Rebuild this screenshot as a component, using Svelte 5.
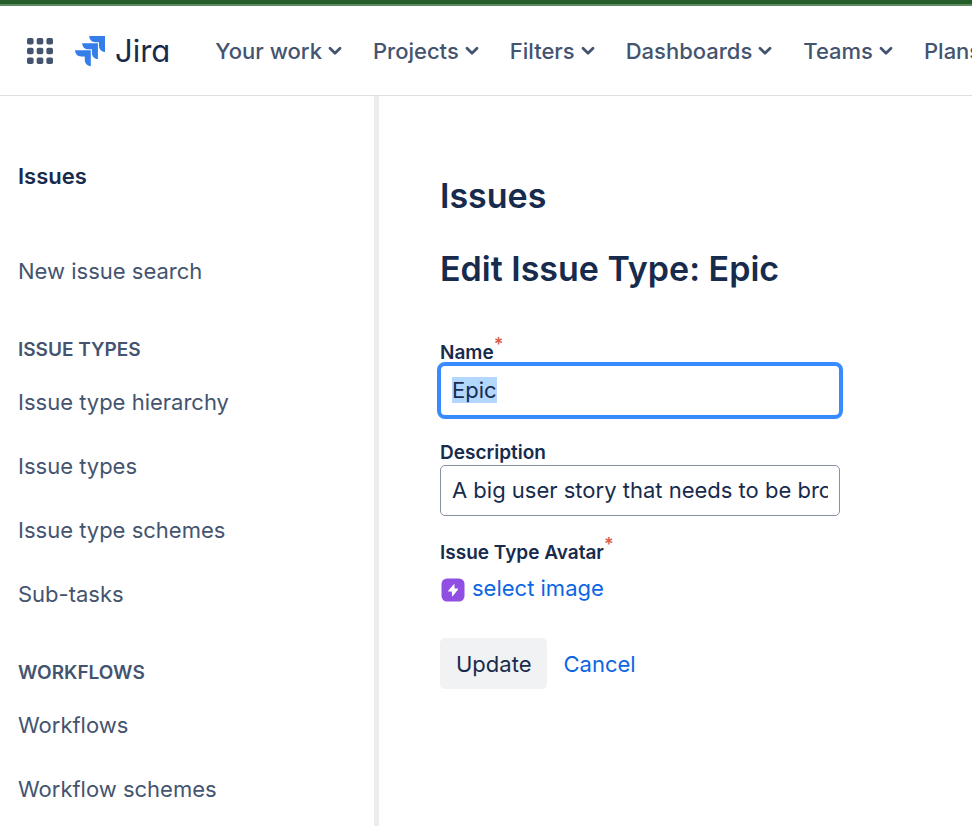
<script>
  import { onMount } from "svelte";

  const navItems = [
    "Your work",
    "Projects",
    "Filters",
    "Dashboards",
    "Teams",
    "Plans",
  ];

  const sections = [
    {
      title: "Issue types",
      links: [
        "Issue type hierarchy",
        "Issue types",
        "Issue type schemes",
        "Sub-tasks",
      ],
    },
    { title: "Workflows", links: ["Workflows", "Workflow schemes"] },
  ];

  let name = "Epic";
  let description =
    "A big user story that needs to be broken down. Created by Jira Software - do not edit or delete.";
  let nameRef = null;

  onMount(() => {
    nameRef.focus();
    nameRef.select();
  });
</script>

<div class="page">
  <header>
    <button class="switcher" aria-label="Switch to">
      <svg width="26" height="26" viewBox="0 0 26 26" fill="currentColor">
        {#each [0, 9.7, 19.4] as y}
          {#each [0, 9.7, 19.4] as x}
            <rect {x} {y} width="6.6" height="6.6" rx="1.8" />
          {/each}
        {/each}
      </svg>
    </button>
    <a class="logo" href="#home">
      <svg width="30" height="32" viewBox="0 -1 30 32" fill="#357de8">
        <path d="M14.2 0H30V16C26.4 15.8 24 13.2 24 9.8V6.2H20.4C16.8 6.2 14.3 3.6 14.2 0Z" />
        <path d="M7.2 7.2H22.9V23C19.3 22.8 16.9 20.3 16.9 16.9V13.3H13.3C9.7 13.3 7.3 10.8 7.2 7.2Z" />
        <path d="M0 14.3H15.8V30.3C12.2 30 9.8 27.5 9.8 24.1V20.5H6.2C2.6 20.5 0.2 17.9 0 14.3Z" />
      </svg>
      <span>Jira</span>
    </a>
    <nav>
      {#each navItems as item}
        <button>
          {item}
          <svg width="14" height="10" viewBox="0 0 14 10" fill="none">
            <path
              d="M2 2.3L7 7.2L12 2.3"
              stroke="currentColor"
              stroke-width="2.8"
              stroke-linecap="round"
              stroke-linejoin="round" />
          </svg>
        </button>
      {/each}
    </nav>
  </header>

  <div class="body">
    <aside>
      <h2>Issues</h2>
      <a href="#search">New issue search</a>
      {#each sections as section}
        <h3>{section.title}</h3>
        {#each section.links as link}
          <a href="#link">{link}</a>
        {/each}
      {/each}
    </aside>

    <main>
      <h1>Issues</h1>
      <h1>Edit Issue Type: Epic</h1>
      <form on:submit|preventDefault>
        <div class="field">
          <label for="name">Name<span class="required">*</span></label>
          <input id="name" bind:this={nameRef} bind:value={name} />
        </div>
        <div class="field">
          <label for="description">Description</label>
          <input id="description" bind:value={description} />
        </div>
        <div class="field">
          <div class="label">
            Issue Type Avatar<span class="required">*</span>
          </div>
          <a class="avatar" href="#avatar">
            <svg width="24" height="24" viewBox="0 0 24 24">
              <rect x="0.5" y="0.5" width="23" height="23" rx="5.5" fill="#904ee2" />
              <path
                d="M12.9 6.2L7.2 12.7Q6.9 13.5 7.6 13.6H10.9V17.6Q11.2 18.5 11.9 18L17 11.5Q17.4 10.7 16.6 10.6H13.5V6.6Q13.4 5.9 12.9 6.2Z"
                fill="#fff" />
            </svg>
            select image
          </a>
        </div>
        <div class="actions">
          <button type="submit">Update</button>
          <a href="#cancel">Cancel</a>
        </div>
      </form>
    </main>
  </div>
</div>

<style>
  :global(body) {
    background: #fff;
  }

  .page {
    min-height: 100vh;
    display: flex;
    flex-direction: column;
    overflow: hidden;
    box-sizing: border-box;
    border-top: 4px solid #265e2b;
    font-family: Inter, "Liberation Sans", sans-serif;
    font-size: 22px;
    line-height: 32px;
    color: #172b4d;
  }

  button {
    font: inherit;
    color: inherit;
    border: 0;
    padding: 0;
    background: transparent;
    cursor: pointer;
  }

  a {
    color: #0c66e4;
    text-decoration: none;
  }

  header {
    height: 89px;
    display: flex;
    align-items: center;
    padding-left: 27px;
    border-top: 2px solid #5d8a60;
    border-bottom: 1px solid #dcdfe4;
    color: #44546f;
    white-space: nowrap;
  }

  header svg {
    display: block;
    flex: none;
  }

  .logo {
    display: flex;
    align-items: center;
    gap: 10px;
    margin: 0 45px 0 22px;
    color: #172b4d;
    font-size: 31px;
    font-weight: 400;
    font-feature-settings: "cv11";
  }

  nav {
    display: flex;
    gap: 31px;
    font-weight: 500;
  }

  nav button {
    display: flex;
    align-items: center;
    gap: 6px;
  }

  .body {
    flex: 1;
    display: flex;
  }

  aside {
    width: 356px;
    flex: none;
    padding: 64px 0 0 18px;
    border-right: 5px solid #ecedef;
  }

  aside h2 {
    margin: 0 0 47px;
    font-size: 22px;
    font-weight: 600;
  }

  aside h3 {
    margin: 0;
    padding: 35px 0 8px;
    font-size: 19px;
    line-height: 24px;
    font-weight: 600;
    text-transform: uppercase;
    color: #44546f;
  }

  aside a {
    display: block;
    line-height: 64px;
    color: #44546f;
  }

  main {
    flex: 1;
    min-width: 0;
    padding: 76px 60px 60px 61px;
  }

  h1 {
    margin: 0 0 25px;
    font-size: 34px;
    line-height: 48px;
    font-weight: 600;
  }

  form {
    padding-top: 23px;
  }

  .field {
    margin-bottom: 25px;
  }

  label,
  .label {
    display: block;
    font-size: 19px;
    line-height: 24px;
    font-weight: 600;
  }

  .required {
    position: relative;
    top: -8px;
    font-size: 18px;
    line-height: 1;
    font-weight: 600;
    color: #d9604f;
  }

  input {
    display: block;
    box-sizing: border-box;
    width: 100%;
    max-width: 400px;
    height: 51px;
    padding: 0 11px 2px;
    border: 1px solid #8590a2;
    border-radius: 5px;
    background: #fff;
    font: inherit;
    color: inherit;
  }

  input:focus {
    border-color: #fff;
    outline: 4px solid #388bff;
    outline-offset: -1px;
  }

  input::selection {
    background: #b3d7ff;
    color: #172b4d;
  }

  .avatar {
    display: flex;
    align-items: center;
    gap: 7px;
    padding: 7px 0 0 1px;
  }

  .avatar svg {
    margin-top: 3px;
  }

  .actions {
    display: flex;
    align-items: center;
    gap: 16px;
    padding-top: 9px;
  }

  .actions button {
    height: 51px;
    padding: 0 16px;
    border-radius: 5px;
    background: #f1f2f4;
  }
</style>
